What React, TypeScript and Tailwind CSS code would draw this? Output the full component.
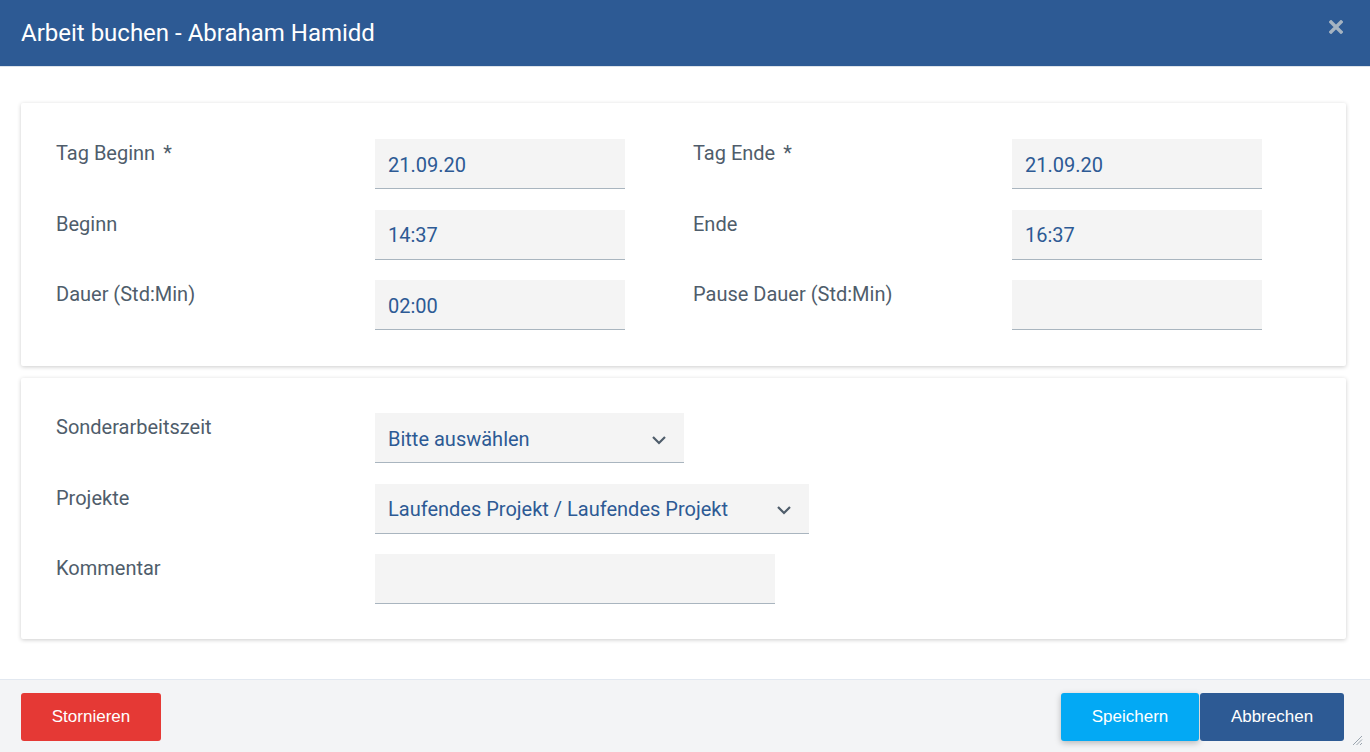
import React from "react";

const Field = ({ label, value, w = "w-[250px]", star, chevron }: { label: string; value?: string; w?: string; star?: boolean; chevron?: boolean }) => (
  <div className="flex items-start">
    <div className="w-[319px] shrink-0 pt-[2px] text-[20px] leading-[24px] text-[#4f5d6b]">
      {label}
      {star && <span className="ml-[8px]">*</span>}
    </div>
    <div className={`${w} h-[50px] bg-[#f4f4f4] border-b border-[#a9b5bf] flex items-center justify-between pl-[13px] pr-[17px] pt-[2px] text-[20px] text-[#2d5a94]`}>
      <span>{value}</span>
      {chevron && (
        <svg width="16" height="10" viewBox="0 0 16 10" className="mt-[2px]">
          <path d="M2 2 L8 8 L14 2" fill="none" stroke="#4f5d6b" strokeWidth="2.2" />
        </svg>
      )}
    </div>
  </div>
);

export default function App() {
  return (
    <div className="relative w-full h-[752px] flex flex-col bg-white" style={{ fontFamily: "Roboto, 'Liberation Sans', sans-serif" }}>
      <div className="h-[67px] shrink-0 bg-[#2d5a94] border-b border-[#dde3ea] flex items-center justify-between pl-[21px] pr-[26px]">
        <div className="text-white text-[24px] leading-none">Arbeit buchen - Abraham Hamidd</div>
        <svg width="14" height="14" viewBox="0 0 14 14" className="mb-[12px] mr-[1px]">
          <path d="M2 2 L12 12 M12 2 L2 12" stroke="#a5b3c1" strokeWidth="3.4" strokeLinecap="square" />
        </svg>
      </div>
      <div className="flex-1 px-[21px] pt-[36px] flex flex-col gap-[12px] pr-[24px]">
        <div className="bg-white shadow-[0_1px_4px_rgba(0,0,0,0.2)] rounded-[2px] pl-[35px] pt-[36px] pb-[36px] flex flex-col gap-[20.5px]">
          <div className="flex">
            <Field label="Tag Beginn" star value="21.09.20" />
            <div className="w-[68px]" />
            <Field label="Tag Ende" star value="21.09.20" />
          </div>
          <div className="flex">
            <Field label="Beginn" value="14:37" />
            <div className="w-[68px]" />
            <Field label="Ende" value="16:37" />
          </div>
          <div className="flex">
            <Field label="Dauer (Std:Min)" value="02:00" />
            <div className="w-[68px]" />
            <Field label="Pause Dauer (Std:Min)" value="" />
          </div>
        </div>
        <div className="bg-white shadow-[0_1px_4px_rgba(0,0,0,0.2)] rounded-[2px] pl-[35px] pt-[35px] pb-[35px] flex flex-col gap-[20.5px]">
          <Field label="Sonderarbeitszeit" value="Bitte auswählen" w="w-[309px]" chevron />
          <Field label="Projekte" value="Laufendes Projekt / Laufendes Projekt" w="w-[434px]" chevron />
          <Field label="Kommentar" value="" w="w-[400px]" />
        </div>
      </div>
      <div className="h-[73px] shrink-0 bg-[#f3f4f6] border-t border-[#e2e8f0] flex items-start justify-between pl-[21px] pr-[26px] pt-[13px]" style={{ fontFamily: "'Liberation Sans', Arial, sans-serif" }}>
        <button className="w-[140px] h-[48px] bg-[#e53935] text-white text-[17px] rounded-[3px]">Stornieren</button>
        <div className="flex gap-[1px]">
          <button className="w-[138px] h-[48px] bg-[#03a9f4] text-white text-[17px] rounded-[3px] shadow-[0_2px_6px_rgba(0,0,0,0.25)]">Speichern</button>
          <button className="w-[144px] h-[48px] bg-[#2d5a94] text-white text-[17px] rounded-[3px]">Abbrechen</button>
        </div>
      </div>
      <svg width="12" height="12" viewBox="0 0 12 12" className="absolute right-[7px] bottom-[6px]">
        <path d="M11 2 L2 11 M11 5.5 L5.5 11 M11 9 L9 11" stroke="#9aa4ae" strokeWidth="1" />
      </svg>
    </div>
  );
}
